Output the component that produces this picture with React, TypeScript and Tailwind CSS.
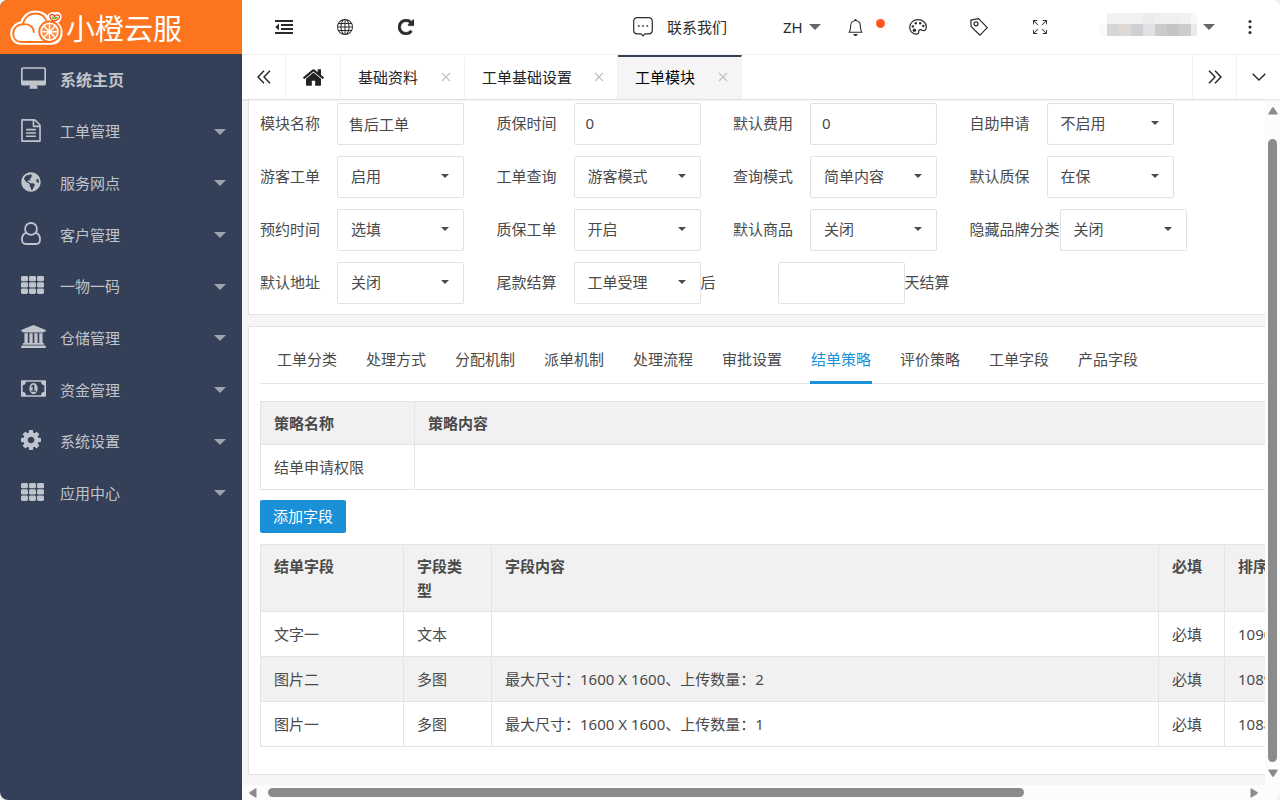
import type { ReactNode } from "react";
import { BsArrowsFullscreen, BsBell, BsGlobe } from "react-icons/bs";
import { FaGlobeAmericas } from "react-icons/fa";

function Glyph({ box, className, children }: { box: string; className: string; children: ReactNode }) {
  return (
    <svg viewBox={box} className={className} fill="currentColor" aria-hidden="true">
      {children}
    </svg>
  );
}

const DesktopIcon = () => (
  <Glyph box="-64 0 1920 1664" className="h-[22px] w-[25px]">
    <path d="M1728 992v-832q0-13-9.500-22.500t-22.500-9.500h-1600q-13 0-22.500 9.500t-9.500 22.500v832q0 13 9.500 22.500t22.500 9.500h1600q13 0 22.500-9.500t9.500-22.500zm128-832v1088q0 66-47 113t-113 47h-544q0 37 16 77.500t32 71 16 43.500q0 26-19 45t-45 19h-512q-26 0-45-19t-19-45q0-14 16-44t32-70 16-78h-544q-66 0-113-47t-47-113v-1088q0-66 47-113t113-47h1600q66 0 113 47t47 113z" />
  </Glyph>
);

const FileIcon = () => (
  <Glyph box="128 0 1536 1792" className="h-[23px] w-5">
    <path d="M1596 380q28 28 48 76t20 88v1152q0 40-28 68t-68 28h-1344q-40 0-68-28t-28-68v-1600q0-40 28-68t68-28h896q40 0 88 20t76 48zm-444-244v376h376q-10-29-22-41l-313-313q-12-12-41-22zm384 1528v-1024h-416q-40 0-68-28t-28-68v-416h-768v1536h1280zm-1024-864q0-14 9-23t23-9h704q14 0 23 9t9 23v64q0 14-9 23t-23 9h-704q-14 0-23-9t-9-23v-64zm736 224q14 0 23 9t9 23v64q0 14-9 23t-23 9h-704q-14 0-23-9t-9-23v-64q0-14 9-23t23-9h704zm0 256q14 0 23 9t9 23v64q0 14-9 23t-23 9h-704q-14 0-23-9t-9-23v-64q0-14 9-23t23-9h704z" />
  </Glyph>
);

const PersonIcon = () => (
  <svg viewBox="0 0 20 23" className="h-[23px] w-5" fill="none" stroke="currentColor" strokeWidth="1.800" aria-hidden="true">
    <circle cx="10" cy="6.900" r="5.900" />
    <path d="M5.600 10.900C2.300 11.500 1 14.200 1 17.500C1 20.200 2.600 22 5 22H15C17.400 22 19 20.200 19 17.500C19 14.200 17.700 11.500 14.400 10.900" />
  </svg>
);

const GridIcon = () => (
  <Glyph box="0 0 23 18" className="h-[18px] w-[23px]">
    {[0, 6.300, 12.600].map((y) =>
      [0, 8, 16].map((x) => <rect key={`${x}-${y}`} x={x} y={y} width="7" height="5.300" rx="1.400" />),
    )}
  </Glyph>
);

const BankIcon = () => (
  <Glyph box="0 0 1920 1792" className="h-[23px] w-[25px]">
    <path d="M960 0l960 384v128h-128q0 26-20.500 45t-48.500 19h-1526q-28 0-48.500-19t-20.500-45h-128v-128zm-704 640h256v768h128v-768h256v768h128v-768h256v768h128v-768h256v768h59q28 0 48.500 19t20.500 45v64h-1664v-64q0-26 20.500-45t48.500-19h59v-768zm1595 960q28 0 48.500 19t20.500 45v128h-1920v-128q0-26 20.500-45t48.500-19h1782z" />
  </Glyph>
);

const MoneyIcon = () => (
  <Glyph box="0 256 1920 1280" className="h-[17px] w-[25px]">
    <path
      fillRule="evenodd"
      d="M768 1152h384v-96h-128v-448h-114l-148 137 77 80q42-37 55-57h2v288h-128v96zm512-256q0 70-21 142t-59.500 134-101.500 101-138 39-138-39-101.500-101-59.500-134-21-142 21-142 59.500-134 101.500-101 138-39 138 39 101.500 101 59.500 134 21 142zm512 256v-512q-106 0-181-75t-75-181h-1152q0 106-75 181t-181 75v512q106 0 181 75t75 181h1152q0-106 75-181t181-75zm128-832v1152q0 26-19 45t-45 19h-1792q-26 0-45-19t-19-45v-1152q0-26 19-45t45-19h1792q26 0 45 19t19 45z"
    />
  </Glyph>
);

const CogIcon = () => (
  <Glyph box="128 128 1536 1536" className="h-5 w-5">
    <path d="M1152 896q0-106-75-181t-181-75-181 75-75 181 75 181 181 75 181-75 75-181zm512-109v222q0 12-8 23t-20 13l-185 28q-19 54-39 91 35 50 107 138 10 12 10 25t-9 23q-27 37-99 108t-94 71q-12 0-26-9l-138-108q-44 23-91 38-16 136-29 186-7 28-36 28h-222q-14 0-24.500-8.500t-11.500-21.500l-28-184q-49-16-90-37l-141 107q-10 9-25 9-14 0-25-11-126-114-165-168-7-10-7-23 0-12 8-23 15-21 51-66.500t54-70.500q-27-50-41-99l-183-27q-13-2-21-12.500t-8-23.500v-222q0-12 8-23t19-13l186-28q14-46 39-92-40-57-107-138-10-12-10-24 0-10 9-23 26-36 98.500-107.500t94.500-71.500q13 0 26 10l138 107q44-23 91-38 16-136 29-186 7-28 36-28h222q14 0 24.500 8.500t11.500 21.500l28 184q49 16 90 37l142-107q9-9 24-9 13 0 25 10 129 119 165 170 7 8 7 22 0 12-8 23-15 21-51 66.500t-54 70.500q26 50 41 98l183 28q13 2 21 12.500t8 23.500z" />
  </Glyph>
);

const HomeIcon = () => (
  <Glyph box="89 253 1614 1283" className="h-[17px] w-[21px]">
    <path d="M1472 992v480q0 26-19 45t-45 19h-384v-384h-256v384h-384q-26 0-45-19t-19-45v-480q0-1 .5-3t.5-3l575-474 575 474q1 2 1 6zm223-69l-62 74q-8 9-21 11h-3q-13 0-21-7l-692-577-692 577q-12 8-24 7-13-2-21-11l-62-74q-8-10-7-23.500t11-21.500l719-599q32-26 76-26t76 26l244 204v-195q0-14 9-23t23-9h192q14 0 23 9t9 23v408l219 182q10 8 11 21.500t-7 23.500z" />
  </Glyph>
);

const ReloadIcon = () => (
  <Glyph box="128 128 1536 1536" className="h-4 w-4">
    <path
      stroke="currentColor"
      strokeWidth="50"
      d="M1664 256v448q0 26-19 45t-45 19h-448q-42 0-59-40-17-39 14-69l138-138q-148-137-349-137-104 0-198.500 40.500t-163.500 109.500-109.500 163.500-40.500 198.500 40.500 198.500 109.500 163.500 163.500 109.500 198.500 40.500q119 0 225-52t179-147q7-10 23-12 15 0 25 9l137 138q9 8 9.500 20.500t-7.500 22.500q-109 132-264 204.500t-327 72.500q-156 0-298-61t-245-164-164-245-61-298 61-298 164-245 245-164 298-61q147 0 284.500 55.500t244.500 156.500l130-129q29-31 70-14 39 17 39 59z"
    />
  </Glyph>
);

const CollapseIcon = () => (
  <Glyph box="0 0 18 14" className="h-[14px] w-[18px]">
    <path d="M0 0H18V2H0zM6 4H18V6H6zM6 8H18V10H6zM0 12H18V14H0zM4 3.500V10.500L0.300 7z" />
  </Glyph>
);

const ChatIcon = () => (
  <svg viewBox="0 0 20 20" className="h-5 w-5" fill="none" stroke="currentColor" strokeWidth="1.200" aria-hidden="true">
    <path d="M4.600 0.700H15.400C17.800 0.700 19.300 2.200 19.300 4.600V12.900C19.300 15.300 17.800 16.800 15.400 16.800H12L10 18.900L8 16.800H4.600C2.200 16.800 0.700 15.300 0.700 12.900V4.600C0.700 2.200 2.200 0.700 4.600 0.700Z" />
    <path d="M4.900 9H6.600M9.200 9H10.900M13.500 9H15.200" strokeWidth="1.700" />
  </svg>
);

const PaletteIcon = () => (
  <svg viewBox="0 0 18 16" className="h-4 w-[18px]" fill="none" stroke="currentColor" strokeWidth="1.200" aria-hidden="true">
    <path d="M9 0.700C13.700 0.700 17.300 3.800 17.300 7.600C17.300 9.900 16.500 11.600 14.900 11.700C13.600 11.800 13 10.600 11.600 10.600C10.200 10.600 9.500 11.600 9.700 12.800C9.900 14.200 8.700 15.300 6.900 15.200C3.300 15 0.700 11.800 0.700 8.200C0.700 3.900 4.400 0.700 9 0.700Z" />
    <g fill="currentColor" stroke="none">
      <circle cx="3.900" cy="7.400" r="1.200" />
      <circle cx="6.800" cy="4.300" r="1.200" />
      <circle cx="11.200" cy="4.200" r="1.200" />
      <circle cx="14.300" cy="7" r="1.200" />
      <circle cx="5.400" cy="11.300" r="1.700" />
    </g>
  </svg>
);

const TagIcon = () => (
  <svg viewBox="0 0 18 18" className="h-[18px] w-[18px]" fill="none" stroke="currentColor" strokeWidth="1.200" strokeLinejoin="round" aria-hidden="true">
    <path d="M0.800 2.200L8.600 0.700L17.300 9.600L10 17.200L1.200 8.600Z" />
    <circle cx="6" cy="5.800" r="2" />
  </svg>
);

const Caret = ({ className }: { className: string }) => (
  <Glyph box="0 0 12 6" className={className}>
    <path d="M0 0H12L6 6z" />
  </Glyph>
);

const DoubleChevron = ({ flip }: { flip?: boolean }) => (
  <svg viewBox="0 0 14 14" className="h-[14px] w-[14px]" fill="none" stroke="currentColor" strokeWidth="1.400" aria-hidden="true">
    {flip ? <path d="M1 0.700L7 7L1 13.300M7 0.700L13 7L7 13.300" /> : <path d="M7 0.700L1 7L7 13.300M13 0.700L7 7L13 13.300" />}
  </svg>
);

const LogoMark = () => (
  <svg viewBox="0 0 54 36" className="h-9 w-[54px]" fill="none" aria-hidden="true">
    <path d="M11 34.800C4.500 34.800 0.200 30 0.200 23.800C0.200 17.500 4.500 12.500 10.500 11.500C12.500 5 18.500 0.400 25.500 0.400C31 0.400 35 2.500 37.500 5.500C39 2.500 42 1.300 44.800 2.500C48.800 0.800 52.500 4 51.500 8C51 10.300 49.500 12 48.500 13C51 15 52.600 18.500 52.600 22.500C52.600 30 48 34.800 41 34.800Z" fill="#fff" />
    <path d="M41 32H11.500C6.300 32 3.200 28.500 3.200 23.800C3.200 18.500 7 14.500 12.800 14.300C14.300 7.800 19 3.500 25.500 3.500C31 3.500 35 6.500 36.500 11.500" stroke="#fd741e" strokeWidth="1.900" />
    <path d="M12.800 14.300C18.500 13.500 23.500 16.500 23.800 22" stroke="#fd741e" strokeWidth="1.900" strokeLinecap="round" />
    <circle cx="39.500" cy="21.700" r="11.200" fill="#fd741e" />
    <circle cx="39.500" cy="21.700" r="9.300" fill="#fff" />
    <circle cx="39.500" cy="21.700" r="7.600" fill="#fd8f4a" />
    <path d="M39.500 14V29.400M31.800 21.700H47.200M34 16.200L45 27.200M45 16.200L34 27.200" stroke="#fff" strokeWidth="1.400" />
    <path d="M43.800 11.200C40 9 38.900 6 40.700 4.800C42.300 3.800 43.900 5 44.500 6.400C45.400 4.800 48 4.200 49.200 5.700C50.600 7.700 48.200 10.200 43.800 11.200Z" fill="#fff" stroke="#f9502a" strokeWidth="1.400" />
    <path d="M44.300 9.600C42.500 8.700 41.700 7.400 42.100 6.600C43 6.200 44 7 44.500 8C45.200 6.900 46.600 6.300 47.600 7C47.500 8.300 46 9.200 44.300 9.600Z" fill="#4fc21f" />
  </svg>
);

const mosaicTop = ["#f3f2f2", "#f0f1f1", "#f0f1f1", "#ebecee", "#f0f0f0", "#eeeff0", "#f0f1f0"];
const mosaicBottom = ["#d6d6d6", "#dfd9d6", "#cfd0d2", "#dfe1e4", "#cbcbcc", "#c4c4c5", "#cccccc"];

const Mosaic = () => (
  <svg viewBox="0 0 98 24" className="h-6 w-[98px]" shapeRendering="crispEdges" aria-hidden="true">
    <rect x="0" y="11" width="8" height="12" fill="#fafafa" />
    {mosaicTop.map((c, i) => (
      <rect key={i} x={8 + i * 12} y="0" width="12" height="11" fill={c} />
    ))}
    {mosaicBottom.map((c, i) => (
      <rect key={i} x={8 + i * 12} y="11" width="12" height="12" fill={c} />
    ))}
    <rect x="92" y="0" width="6" height="11" fill="#f8f8f8" />
    <rect x="92" y="11" width="6" height="12" fill="#e9eaec" />
  </svg>
);

const menu: { text: string; icon: ReactNode; root?: boolean }[] = [
  { text: "系统主页", icon: <DesktopIcon />, root: true },
  { text: "工单管理", icon: <FileIcon /> },
  { text: "服务网点", icon: <FaGlobeAmericas className="h-5 w-5" /> },
  { text: "客户管理", icon: <PersonIcon /> },
  { text: "一物一码", icon: <GridIcon /> },
  { text: "仓储管理", icon: <BankIcon /> },
  { text: "资金管理", icon: <MoneyIcon /> },
  { text: "系统设置", icon: <CogIcon /> },
  { text: "应用中心", icon: <GridIcon /> },
];

function Sidebar() {
  return (
    <aside className="flex w-[242px] shrink-0 flex-col bg-[#344058]">
      <a href="#home" className="flex h-[54px] shrink-0 items-center gap-[2px] bg-[#fd741e] pt-[2px] pl-[10px] text-white">
        <LogoMark />
        <span className="text-[29px] leading-none">小橙云服</span>
      </a>
      <nav className="flex h-[465px] shrink-0 flex-col text-[#c0c4cb]">
        {menu.map((m) => (
          <a key={m.text} href={`#${m.text}`} className="flex flex-1 items-center pr-4 pl-[21px]">
            <span className="flex w-[39px] items-center pb-[3px]">{m.icon}</span>
            <span className={m.root ? "text-base font-bold" : "text-[15px]"}>{m.text}</span>
            {!m.root && <Caret className="ml-auto h-[6px] w-3 text-[#9da3af]" />}
          </a>
        ))}
      </nav>
    </aside>
  );
}

const iconButton = "flex h-full w-[61px] items-center justify-center";

function TopBar() {
  return (
    <header className="flex h-[55px] shrink-0 items-center border-b border-[#f3f3f3] bg-white pl-[11px] text-[#2b2b2b]">
      <button aria-label="收起菜单" className={iconButton}>
        <CollapseIcon />
      </button>
      <button aria-label="网站" className={iconButton}>
        <BsGlobe className="h-4 w-4" />
      </button>
      <button aria-label="刷新" className={iconButton}>
        <ReloadIcon />
      </button>
      <a href="#contact" className="ml-auto flex items-center gap-[14px]">
        <ChatIcon />
        <span className="w-[61px]">联系我们</span>
      </a>
      <button className="ml-[55px] flex h-full w-[43px] items-center justify-between pr-[5px]">
        ZH
        <Caret className="h-[6px] w-3 text-[#666]" />
      </button>
      <button aria-label="消息" className={`${iconButton} relative pr-[2px]`}>
        <BsBell className="h-[17px] w-[17px]" />
        <span className="absolute top-[19px] right-[2px] h-[9px] w-[9px] rounded-full bg-[#ff5722]" />
      </button>
      <button aria-label="主题" className={iconButton}>
        <PaletteIcon />
      </button>
      <button aria-label="便签" className={iconButton}>
        <TagIcon />
      </button>
      <button aria-label="全屏" className={iconButton}>
        <BsArrowsFullscreen className="h-[14px] w-[14px]" />
      </button>
      <button aria-label="账户" className="flex h-full w-[149px] items-center justify-end gap-[6px] pr-1">
        <span className="pb-1">
          <Mosaic />
        </span>
        <Caret className="h-[6px] w-3 text-[#666]" />
      </button>
      <button aria-label="更多" className={iconButton}>
        <Glyph box="0 0 4 14" className="h-[14px] w-1">
          <circle cx="2" cy="1.600" r="1.500" />
          <circle cx="2" cy="7" r="1.500" />
          <circle cx="2" cy="12.400" r="1.500" />
        </Glyph>
      </button>
    </header>
  );
}

function PageTab({ text, width, active }: { text: string; width: string; active?: boolean }) {
  return (
    <div
      className={`flex items-center justify-between border-t-2 border-r border-r-[#f3f3f3] pr-[13px] pb-[2px] pl-[17px] ${width} ${
        active ? "border-t-[#344058] bg-[#f5f5f5] text-black" : "border-t-transparent"
      }`}
    >
      <a href={`#${text}`}>{text}</a>
      <button aria-label={`关闭${text}`} className="text-[#c2c2c2]">
        <svg viewBox="0 0 10 10" className="h-[10px] w-[10px]" fill="none" stroke="currentColor" strokeWidth="1.200" aria-hidden="true">
          <path d="M1 1L9 9M9 1L1 9" />
        </svg>
      </button>
    </div>
  );
}

function TabBar() {
  return (
    <div className="z-10 flex h-11 shrink-0 bg-white text-[#222] shadow-[0_1px_2px_rgba(0,0,0,0.12)]">
      <button aria-label="向左" className="flex w-11 items-center justify-center border-r border-[#f3f3f3]">
        <DoubleChevron />
      </button>
      <button aria-label="首页" className="flex w-[55px] items-center justify-center border-r border-[#f3f3f3]">
        <HomeIcon />
      </button>
      <PageTab text="基础资料" width="w-[124px]" />
      <PageTab text="工单基础设置" width="w-[153px]" />
      <PageTab text="工单模块" width="w-[124px]" active />
      <button aria-label="向右" className="ml-auto flex w-11 items-center justify-center border-l border-[#f3f3f3]">
        <DoubleChevron flip />
      </button>
      <button aria-label="标签菜单" className="flex w-11 items-center justify-center border-l border-[#f3f3f3]">
        <svg viewBox="0 0 14 8" className="h-2 w-[14px]" fill="none" stroke="currentColor" strokeWidth="1.300" aria-hidden="true">
          <path d="M0.700 0.700L7 7L13.300 0.700" />
        </svg>
      </button>
    </div>
  );
}

const labelClass = "min-w-[77px] shrink-0 whitespace-nowrap pb-[2px]";
const boxClass = "h-[42px] w-[127px] shrink-0 rounded-[2px] border border-[#e2e2e2] bg-white pb-[2px]";

function TextField({ id, label, value }: { id: string; label: string; value: string }) {
  return (
    <div className="flex items-center">
      <label htmlFor={id} className={labelClass}>
        {label}
      </label>
      <input id={id} defaultValue={value} className={`${boxClass} px-[11px]`} />
    </div>
  );
}

function SelectField({ id, label, value }: { id: string; label: string; value: string }) {
  return (
    <div className="flex items-center">
      <label htmlFor={id} className={labelClass}>
        {label}
      </label>
      <div className="relative shrink-0">
        <select id={id} className={`${boxClass} block appearance-none px-[13px]`}>
          <option>{value}</option>
        </select>
        <Caret className="pointer-events-none absolute top-[18px] right-[15px] h-1 w-2" />
      </div>
    </div>
  );
}

function SettingsCard() {
  return (
    <section className="border-x border-b border-[#e4e4e4] bg-white px-[11px] pt-[3px] pb-[10px]">
      <form className="grid w-[914px] grid-cols-4 gap-x-8 gap-y-[11px]">
        <TextField id="name" label="模块名称" value="售后工单" />
        <TextField id="warranty-time" label="质保时间" value="0" />
        <TextField id="fee" label="默认费用" value="0" />
        <SelectField id="self" label="自助申请" value="不启用" />
        <SelectField id="guest" label="游客工单" value="启用" />
        <SelectField id="query" label="工单查询" value="游客模式" />
        <SelectField id="query-mode" label="查询模式" value="简单内容" />
        <SelectField id="default-warranty" label="默认质保" value="在保" />
        <SelectField id="booking" label="预约时间" value="选填" />
        <SelectField id="warranty-order" label="质保工单" value="开启" />
        <SelectField id="goods" label="默认商品" value="关闭" />
        <SelectField id="hide-brand" label="隐藏品牌分类" value="关闭" />
        <SelectField id="address" label="默认地址" value="关闭" />
        <div className="col-span-3 flex items-center">
          <SelectField id="balance" label="尾款结算" value="工单受理" />
          <TextField id="days" label="后" value="" />
          <span className="pb-[2px]">天结算</span>
        </div>
      </form>
    </section>
  );
}

const sections = ["工单分类", "处理方式", "分配机制", "派单机制", "处理流程", "审批设置", "结单策略", "评价策略", "工单字段", "产品字段"];

const fields = [
  { name: "文字一", type: "文本", content: "", order: "1090" },
  { name: "图片二", type: "多图", content: "最大尺寸：1600 X 1600、上传数量：2", order: "1089" },
  { name: "图片一", type: "多图", content: "最大尺寸：1600 X 1600、上传数量：1", order: "1088" },
];

const th = "border border-[#e4e4e4] py-[9px] pr-4 pl-[13px] text-left align-top font-bold leading-6";
const td = "border border-[#e4e4e4] px-[13px] py-[10px] leading-6";

function StrategyCard() {
  return (
    <section className="border border-[#e4e4e4] bg-white px-[11px] pt-[10px] pb-[27px]">
      <div role="tablist" className="flex h-[47px] gap-[27px] border-b border-[#e4e4e4] pl-4">
        {sections.map((s) => (
          <button
            key={s}
            role="tab"
            aria-selected={s === "结单策略"}
            className={`-mb-px w-[62px] shrink-0 border-b-[3px] text-center whitespace-nowrap ${
              s === "结单策略" ? "border-[#1a90d9] text-[#1a90d9]" : "border-transparent"
            }`}
          >
            {s}
          </button>
        ))}
      </div>
      <table className="mt-[17px] w-full table-fixed border-collapse">
        <colgroup>
          <col className="w-[154px]" />
          <col />
        </colgroup>
        <thead className="bg-[#f1f1f1]">
          <tr>
            <th className={th}>策略名称</th>
            <th className={th}>策略内容</th>
          </tr>
        </thead>
        <tbody>
          <tr>
            <td className={td}>结单申请权限</td>
            <td className={td}></td>
          </tr>
        </tbody>
      </table>
      <button className="mt-[10px] flex h-[33px] w-[86px] items-center justify-center rounded-[2px] bg-[#1a90d9] text-white">
        添加字段
      </button>
      <table className="mt-[11px] w-full table-fixed border-collapse">
        <colgroup>
          <col className="w-[143px]" />
          <col className="w-[88px]" />
          <col className="w-[667px]" />
          <col className="w-[66px]" />
          <col />
        </colgroup>
        <thead className="bg-[#f1f1f1]">
          <tr>
            <th className={th}>结单字段</th>
            <th className={th}>字段类型</th>
            <th className={th}>字段内容</th>
            <th className={th}>必填</th>
            <th className={th}>排序</th>
          </tr>
        </thead>
        <tbody>
          {fields.map((f) => (
            <tr key={f.name} className="even:bg-[#f1f1f1]">
              <td className={td}>{f.name}</td>
              <td className={td}>{f.type}</td>
              <td className={td}>{f.content}</td>
              <td className={td}>必填</td>
              <td className={td}>{f.order}</td>
            </tr>
          ))}
        </tbody>
      </table>
    </section>
  );
}

export default function App() {
  return (
    <div className="h-screen bg-[#f0f0f0]">
      <div className="flex h-full overflow-hidden rounded-lg bg-white font-['Noto_Sans','Noto_Sans_CJK_SC',sans-serif] text-[15px] text-[#4a4a4a]">
        <Sidebar />
        <div className="flex min-w-0 flex-1 flex-col">
          <TopBar />
          <TabBar />
          <div className="flex min-h-0 flex-1">
            <main className="min-w-0 flex-1 overflow-hidden bg-[#f5f5f5]">
              <div className="flex w-[1320px] flex-col gap-[11px] px-[6px] pt-px">
                <SettingsCard />
                <StrategyCard />
              </div>
            </main>
            <div className="flex w-[15px] shrink-0 flex-col items-center bg-[#fcfcfc] pt-2 pb-2 text-[#8b8b8b]">
              <Glyph box="0 0 10 8" className="h-2 w-[10px] shrink-0">
                <path d="M4 0.800Q5 -0.400 6 0.800L9.600 6.400Q10 7.500 9 7.500H1Q0 7.500 0.400 6.400z" />
              </Glyph>
              <div className="mt-6 mb-[7px] w-[9px] flex-1 rounded-full bg-[#8b8b8b]" />
              <Glyph box="0 0 10 8" className="h-2 w-[10px] shrink-0">
                <path d="M4 7.200Q5 8.400 6 7.200L9.600 1.600Q10 0.500 9 0.500H1Q0 0.500 0.400 1.600z" />
              </Glyph>
            </div>
          </div>
          <div className="flex h-[15px] shrink-0 items-center bg-[#fcfcfc] pr-[22px] pl-[7px] text-[#8b8b8b]">
            <Glyph box="0 0 8 10" className="h-[10px] w-2 shrink-0">
              <path d="M0.800 4Q-0.400 5 0.800 6L6.400 9.600Q7.500 10 7.500 9V1Q7.500 0 6.400 0.400z" />
            </Glyph>
            <div className="ml-[11px] flex flex-1">
              <div className="h-[9px] w-[77%] rounded-full bg-[#8b8b8b]" />
            </div>
            <Glyph box="0 0 8 10" className="h-[10px] w-2 shrink-0">
              <path d="M7.200 4Q8.400 5 7.200 6L1.600 9.600Q0.500 10 0.500 9V1Q0.500 0 1.600 0.400z" />
            </Glyph>
          </div>
        </div>
      </div>
    </div>
  );
}
